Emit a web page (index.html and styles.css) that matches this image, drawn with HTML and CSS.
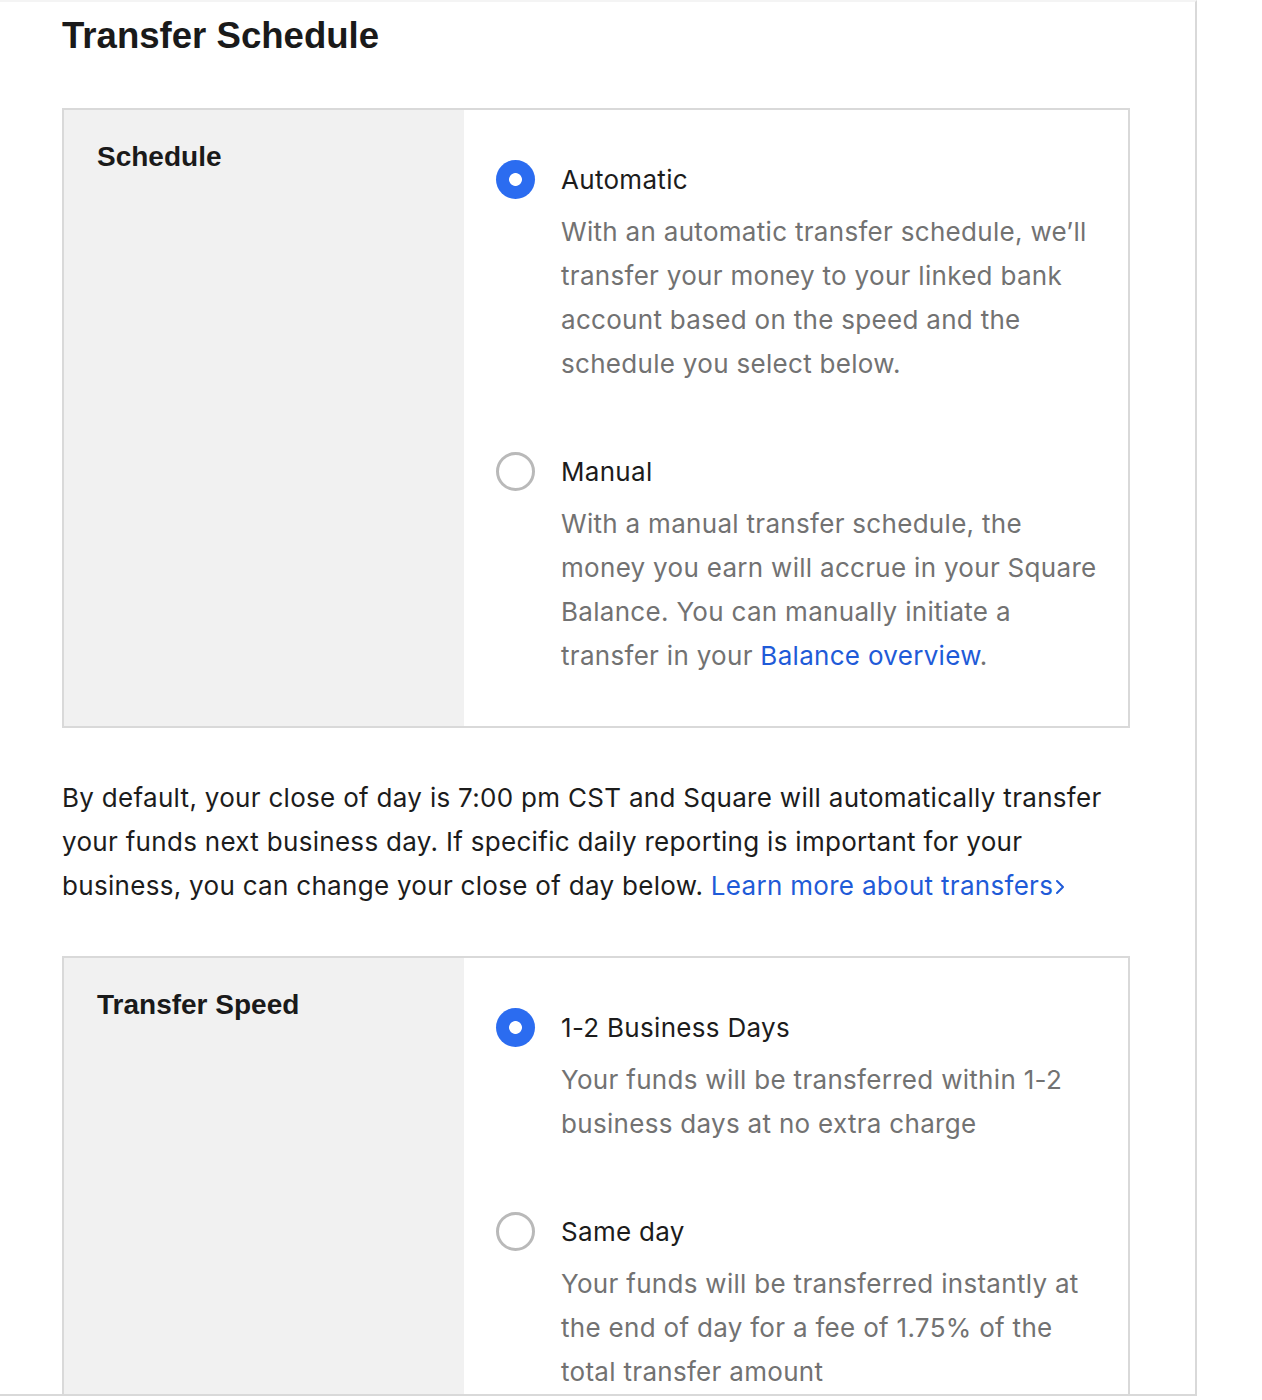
FILE: index.html
```html
<!DOCTYPE html>
<html lang="en">
<head>
<meta charset="utf-8">
<title>Transfer Schedule</title>
<link rel="stylesheet" href="styles.css">
</head>
<body>
<div class="page">
  <div class="content">
    <h1 class="title">Transfer Schedule</h1>

    <section class="setting">
      <div class="setting-side"><h2 class="setting-name">Schedule</h2></div>
      <div class="setting-body">
        <div class="option">
          <span class="radio radio-on"></span>
          <div class="option-label">Automatic</div>
          <p class="option-desc">With an automatic transfer schedule, we’ll transfer your money to your linked bank account based on the speed and the schedule you select below.</p>
        </div>
        <div class="option">
          <span class="radio"></span>
          <div class="option-label">Manual</div>
          <p class="option-desc">With a manual transfer schedule, the money you earn will accrue in your Square Balance. You can manually initiate a transfer in your <a class="link" href="#">Balance overview</a>.</p>
        </div>
      </div>
    </section>

    <p class="info">By default, your close of day is 7:00 pm CST and Square will automatically transfer your funds next business day. If specific daily reporting is important for your business, you can change your close of day below. <a class="link" href="#">Learn more about transfers</a><svg class="chev" width="12" height="20" viewBox="0 0 12 20"><polyline points="3,4 9,10 3,16" fill="none" stroke="#1f5bd8" stroke-width="2" stroke-linecap="round" stroke-linejoin="round"/></svg></p>

    <section class="setting">
      <div class="setting-side"><h2 class="setting-name">Transfer Speed</h2></div>
      <div class="setting-body">
        <div class="option">
          <span class="radio radio-on"></span>
          <div class="option-label">1-2 Business Days</div>
          <p class="option-desc">Your funds will be transferred within 1-2 business days at no extra charge</p>
        </div>
        <div class="option">
          <span class="radio"></span>
          <div class="option-label">Same day</div>
          <p class="option-desc">Your funds will be transferred instantly at the end of day for a fee of 1.75% of the total transfer amount</p>
        </div>
      </div>
    </section>
  </div>
</div>
</body>
</html>
```

FILE: styles.css
```css
* { box-sizing: border-box; }

html, body {
  margin: 0;
  padding: 0;
  background: #ffffff;
}

body {
  font-family: Inter, "Noto Sans", "Liberation Sans", sans-serif;
  color: #1c1c1c;
}

.page {
  width: 1197px;
  height: 1396px;
  border-top: 2px solid #f4f4f4;
  border-right: 2px solid #d9d9d9;
  border-bottom: 2px solid #d9d9d9;
  overflow: hidden;
}

.content {
  margin-left: 62px;
  width: 1068px;
}

.title {
  margin: 0 0 50px;
  padding-top: 12px;
  font-family: "Liberation Sans", Arial, sans-serif;
  font-weight: 700;
  font-size: 36.6px;
  line-height: 44px;
  color: #1a1a1a;
}

.setting {
  display: flex;
  border: 2px solid #d9d9d9;
}

.setting-side {
  flex: 0 0 400px;
  background: #f1f1f1;
  padding: 32px 33px;
}

.setting-name {
  margin: 0;
  font-family: "Liberation Sans", Arial, sans-serif;
  font-weight: 700;
  font-size: 28px;
  line-height: 30px;
  color: #1a1a1a;
}

.setting-body {
  flex: 1;
  padding: 48px 28px 48px 32px;
  display: flex;
  flex-direction: column;
  gap: 64px;
}

.option {
  display: grid;
  grid-template-columns: 39px 1fr;
  column-gap: 26px;
}

.radio {
  grid-row: 1;
  grid-column: 1;
  width: 39px;
  height: 39px;
  margin-top: 2px;
  border-radius: 50%;
  border: 3px solid #b9b9b9;
  background: #fff;
}

.radio-on {
  border: none;
  background: radial-gradient(circle, #ffffff 0 6px, #2b6cf0 6.8px);
}

.option-label {
  grid-row: 1;
  grid-column: 2;
  font-size: 26px;
  letter-spacing: 0.3px;
  line-height: 44px;
  color: #1c1c1c;
}

.option-desc {
  grid-row: 2;
  grid-column: 2;
  margin: 8px 0 0;
  font-size: 26px;
  letter-spacing: 0.3px;
  line-height: 44px;
  color: #727272;
}

.link {
  color: #1f5bd8;
  text-decoration: none;
}

.chev {
  vertical-align: -2px;
  margin-left: 1px;
}

.info {
  margin: 48px 0;
  font-size: 26px;
  letter-spacing: 0.3px;
  line-height: 44px;
  color: #1c1c1c;
}
```
